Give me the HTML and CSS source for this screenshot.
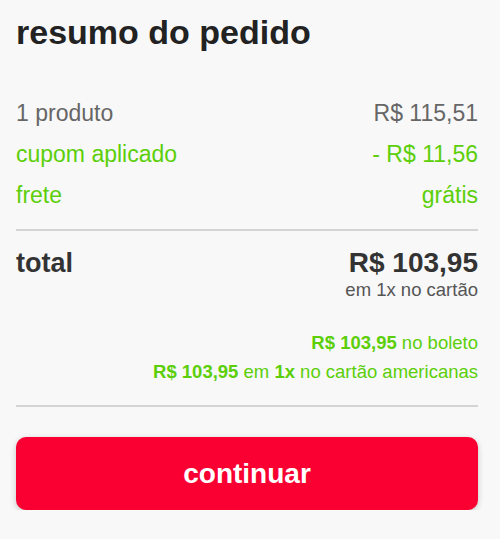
FILE: index.html
```html
<!DOCTYPE html>
<html lang="pt-BR">

<head>
    <meta charset="UTF-8">
    <meta name="viewport" content="width=device-width, initial-scale=1.0">
    <title>Resumo do pedido</title>
    <link rel="stylesheet" href="styles.css">
</head>

<body>
    <div class="summary">
        <h1 class="title">resumo do pedido</h1>

        <div class="lines">
            <div class="line">
                <span>1 produto</span>
                <span>R$ 115,51</span>
            </div>
            <div class="line green">
                <span>cupom aplicado</span>
                <span>- R$ 11,56</span>
            </div>
            <div class="line green">
                <span>frete</span>
                <span>grátis</span>
            </div>
        </div>

        <div class="total-section">
            <div class="total-row">
                <span class="total-label">total</span>
                <div class="total-value">
                    <strong>R$ 103,95</strong>
                    <span>em 1x no cartão</span>
                </div>
            </div>

            <div class="payment-options">
                <p><strong>R$ 103,95</strong> no boleto</p>
                <p><strong>R$ 103,95</strong> em <strong>1x</strong> no cartão americanas</p>
            </div>
        </div>

        <button class="btn-continue">continuar</button>
    </div>
</body>

</html>
```

FILE: styles.css
```css
body {
    font-family: "Liberation Sans", Arial, sans-serif;
    background-color: #f8f8f8;
    color: #333;
    margin: 0;
    padding: 0;
}

.summary {
    padding: 12px 22px 0 16px;
}

.title {
    font-size: 34px;
    font-weight: bold;
    color: #222;
    margin: 0 0 41px 0;
    line-height: 40px;
}

.lines {
    padding-bottom: 13px;
    border-bottom: 2px solid #d4d4d4;
}

.line {
    display: flex;
    justify-content: space-between;
    font-size: 23px;
    line-height: 41px;
    color: #666;
}

.line.green {
    color: #5ccf0a;
}

.total-section {
    padding: 16px 0 19px;
    border-bottom: 2px solid #d4d4d4;
}

.total-row {
    display: flex;
    justify-content: space-between;
    align-items: flex-start;
}

.total-label {
    font-size: 27px;
    font-weight: bold;
    color: #333;
    line-height: 32px;
}

.total-value {
    display: flex;
    flex-direction: column;
    align-items: flex-end;
}

.total-value strong {
    font-size: 28px;
    line-height: 32px;
    color: #333;
}

.total-value span {
    font-size: 18.5px;
    line-height: 22px;
    color: #555;
}

.payment-options {
    margin-top: 27px;
    text-align: right;
    color: #5ccf0a;
    font-size: 18.5px;
}

.payment-options p {
    margin: 0;
    line-height: 29px;
}

.btn-continue {
    display: block;
    width: 100%;
    height: 73px;
    margin-top: 30px;
    background-color: #fa0032;
    color: white;
    border: none;
    border-radius: 10px;
    font-family: inherit;
    font-size: 28px;
    font-weight: bold;
    box-shadow: 0 2px 6px rgba(0, 0, 0, 0.2);
}
```
